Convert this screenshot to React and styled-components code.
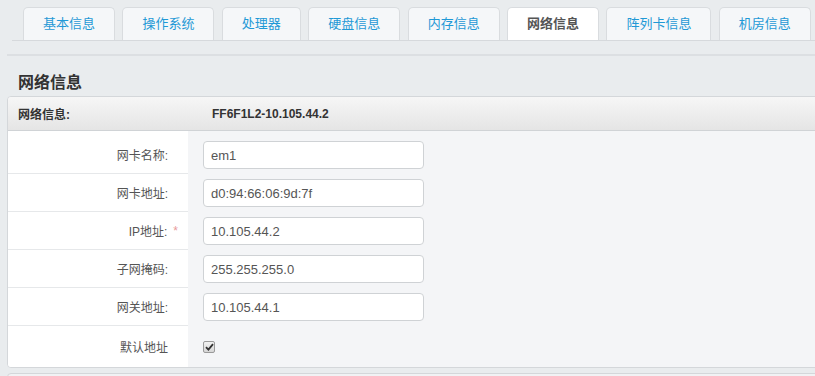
import React from "react";
import styled, { createGlobalStyle, css } from "styled-components";

const Global = createGlobalStyle`
  html, body { margin: 0; padding: 0; background: #e9ecee; overflow: hidden; }
  body { font-family: "Liberation Sans", "Noto Sans CJK SC", sans-serif; color: #555; }
  * { box-sizing: border-box; }
`;

const Page = styled.div`
  width: 830px;
  padding: 7px 0 0 7px;
`;

const TabBar = styled.ul`
  list-style: none;
  margin: 0 0 0 5px;
  padding: 0 0 0 11px;
  display: flex;
  gap: 7.4px;
  border-bottom: 1px solid #d6d9dc;
`;

const Tab = styled.li`
  height: 33px;
  padding: 0 19px;
  line-height: 32px;
  font-size: 13px;
  color: #1f99d6;
  background: #f5f7f9;
  border: 1px solid #d9dcdf;
  border-bottom: none;
  border-radius: 5px 5px 0 0;
  white-space: nowrap;
  ${(p) =>
    p.$active &&
    css`
      background: #fff;
      color: #555;
      font-weight: bold;
    `}
`;

const Divider = styled.div`
  margin-top: 13px;
  height: 2px;
  background: #dcdfe2;
`;

const Title = styled.h3`
  margin: 16px 0 2px 11px;
  font-size: 16px;
  line-height: 22px;
  font-weight: bold;
  color: #333;
`;

const Panel = styled.div`
  border: 1px solid #d4d7da;
  border-radius: 4px;
  overflow: hidden;
  background: #f4f5f7;
`;

const NextPanel = styled(Panel)`
  margin-top: 5px;
  height: 20px;
  background: #f1f2f4;
`;

const Header = styled.div`
  display: flex;
  align-items: center;
  height: 34px;
  padding-left: 10px;
  background: linear-gradient(#f6f6f6, #e5e5e5);
  border-bottom: 1px solid #d0d3d6;
  font-size: 12px;
  font-weight: bold;
  color: #333;
`;

const HeaderLabel = styled.span`
  width: 194px;
`;

const Row = styled.div`
  display: grid;
  grid-template-columns: 180px 1fr;
  height: ${(p) => p.$h}px;
`;

const LabelCell = styled.div`
  display: flex;
  align-items: center;
  justify-content: flex-end;
  padding: ${(p) => p.$pt || 0}px 20px 0 0;
  background: #fff;
  border-bottom: ${(p) => (p.$last ? "none" : "1px solid #e6e8ea")};
  font-size: 12px;
  color: #555;
`;

const Required = styled.span`
  color: #e89a9a;
  margin-left: 6px;
  margin-right: -10px;
  font-size: 12px;
`;

const FieldCell = styled.div`
  display: flex;
  align-items: center;
  padding: ${(p) => p.$pt || 0}px 0 0 15px;
`;

const Input = styled.input`
  width: 221px;
  height: 28px;
  padding: 0 7px;
  border: 1px solid #cfd2d5;
  border-radius: 4px;
  background: #fff;
  font-family: "Liberation Sans", "Noto Sans CJK SC", sans-serif;
  font-size: 13px;
  color: #555;
  outline: none;
`;

const Check = styled.span`
  width: 12px;
  height: 12px;
  border: 1px solid #9a9a9a;
  border-radius: 2px;
  background: linear-gradient(#f2f2f2, #d6d6d6);
  display: inline-flex;
  align-items: center;
  justify-content: center;
  margin-top: 1px;
`;

const tabs = ["基本信息", "操作系统", "处理器", "硬盘信息", "内存信息", "网络信息", "阵列卡信息", "机房信息"];

const fields = [
  { label: "网卡名称:", value: "em1" },
  { label: "网卡地址:", value: "d0:94:66:06:9d:7f" },
  { label: "IP地址:", value: "10.105.44.2", required: true },
  { label: "子网掩码:", value: "255.255.255.0" },
  { label: "网关地址:", value: "10.105.44.1" },
];

export default function App() {
  return (
    <>
      <Global />
      <Page>
        <TabBar>
          {tabs.map((t) => (
            <Tab key={t} $active={t === "网络信息"}>
              {t}
            </Tab>
          ))}
        </TabBar>
        <Divider />
        <Title>网络信息</Title>
        <Panel>
          <Header>
            <HeaderLabel>网络信息:</HeaderLabel>
            <span>FF6F1L2-10.105.44.2</span>
          </Header>
          {fields.map((f, i) => (
            <Row key={f.label} $h={i === 0 ? 43 : 38}>
              <LabelCell $pt={i === 0 ? 5 : 0}>
                {f.label}
                {f.required && <Required>*</Required>}
              </LabelCell>
              <FieldCell $pt={i === 0 ? 5 : 0}>
                <Input readOnly value={f.value} />
              </FieldCell>
            </Row>
          ))}
          <Row $h={41}>
            <LabelCell $last>默认地址</LabelCell>
            <FieldCell>
              <Check>
                <svg width="9" height="8" viewBox="0 0 9 8">
                  <path d="M1 4.2 L3.4 6.6 L8 1.2" fill="none" stroke="#333" strokeWidth="1.8" />
                </svg>
              </Check>
            </FieldCell>
          </Row>
        </Panel>
        <NextPanel />
      </Page>
    </>
  );
}
